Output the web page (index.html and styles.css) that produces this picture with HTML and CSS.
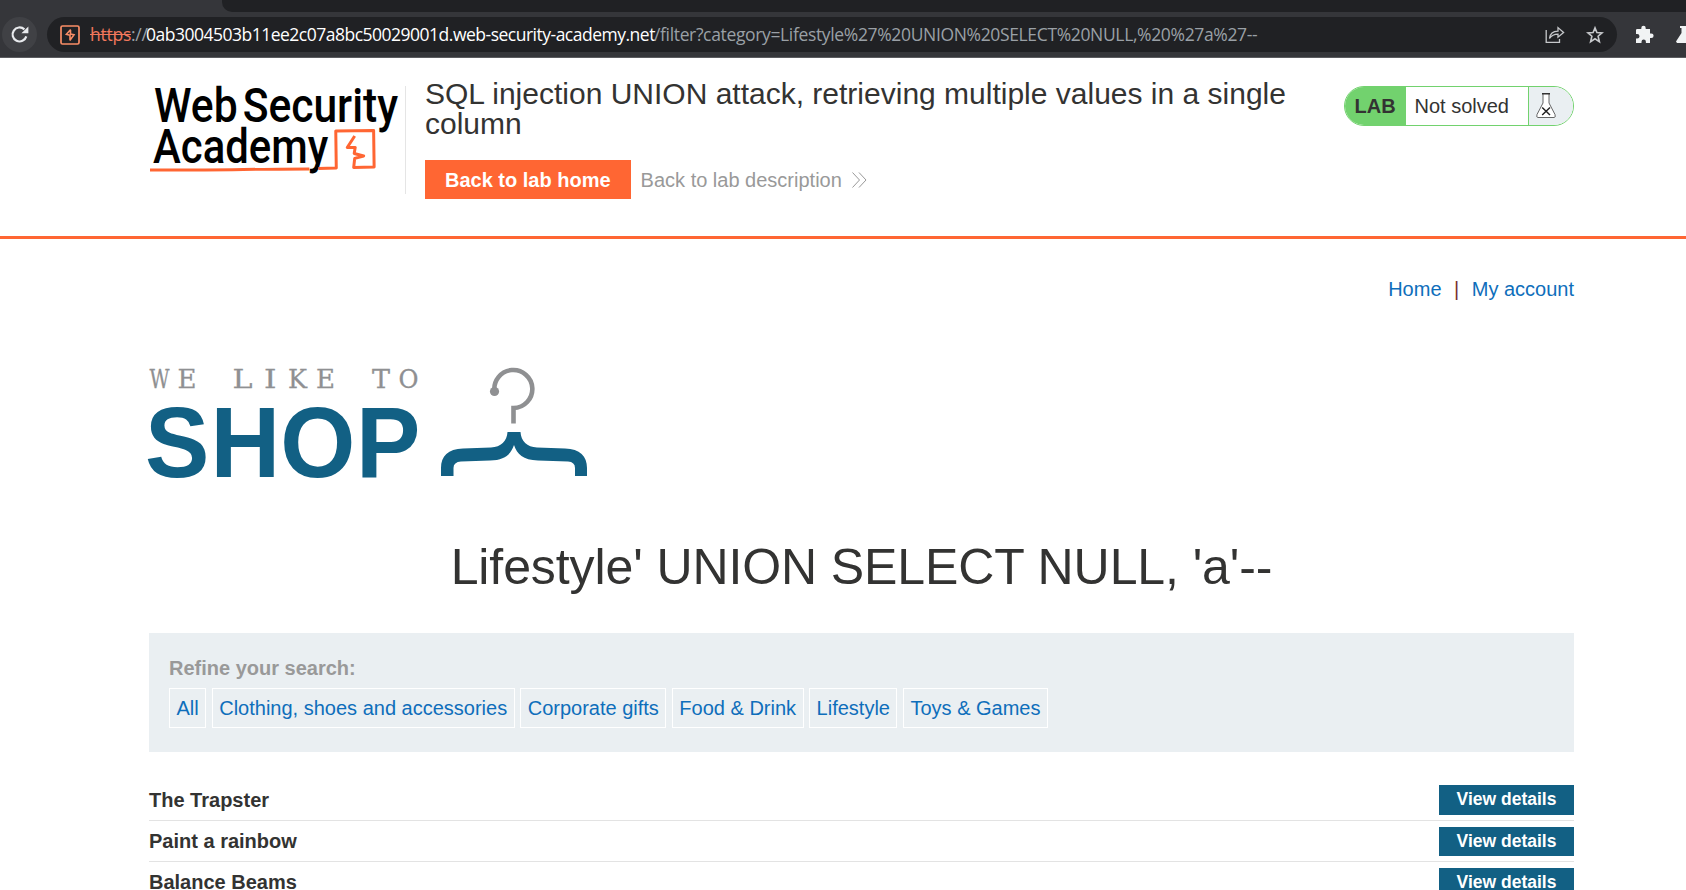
FILE: index.html
```html
<!DOCTYPE html>
<html lang="en">
<head>
<meta charset="utf-8">
<title>SQL injection UNION attack, retrieving multiple values in a single column</title>
<link rel="stylesheet" href="styles.css">
</head>
<body>
<div class="chrome">
  <div class="tabstrip"></div>
  <div class="toolbar">
    <div class="reload">
      <svg width="18" height="17" viewBox="0 0 18 17"><path d="M15.3 10.4A7 7 0 1 1 13.400 3.400" fill="none" stroke="#e8eaed" stroke-width="2.2"/><path d="M17.400 .4V7.200h-7z" fill="#e8eaed"/></svg>
    </div>
    <div class="omnibox">
      <svg class="favicon" width="20" height="20" viewBox="0 0 20 20" fill="none" stroke="#f98d66"><rect x="1" y="1" width="18" height="18" rx="1.5" stroke-width="1.7"/><path d="M10.700 4.500L6.400 9.300 10 10.300V15.500M10.500 5V9L14 9.800 9.800 15.500" stroke-width="1.6"/></svg>
      <div class="url"><span class="scheme"><s>https</s>://</span><span class="host">0ab3004503b11ee2c07a8bc50029001d.web-security-academy.net</span><span class="path">/filter?category=Lifestyle%27%20UNION%20SELECT%20NULL,%20%27a%27--</span></div>
      <svg class="share" width="20" height="18" viewBox="0 0 20 18" fill="none" stroke="#c6c8cb" stroke-width="1.3"><path d="M1.200 4V16.400H14.500V13M4.500 12.500C5 8 8 5.200 13 5.200V1.600L18.600 6.500 13 11.200V8.200C9 8.200 6.500 9.500 4.500 12.500z"/></svg>
      <svg class="star" width="18" height="18" viewBox="0 0 18 18" fill="none" stroke="#c6c8cb" stroke-width="1.6"><path d="M9 1.900L10.900 6.500 16 6.900 12.100 10.200 13.400 15.700 9 12.800 4.600 15.700 5.900 10.200 2 6.900 7.100 6.500z"/></svg>
    </div>
    <svg class="puzzle" width="18" height="19" viewBox="0 0 18 19" fill="#f1f3f4"><path d="M1.500 4H5.300V3a2.200 2.200 0 0 1 4.400 0V4H14v4.500h1.300a2.300 2.300 0 0 1 0 4.600H14V18H9.900v-1.300a2.200 2.200 0 0 0-4.400 0V18H0V13.400H1.300a2.200 2.200 0 0 0 0-4.400H0V5.300A1.300 1.300 0 0 1 1.500 4z"/></svg>
    <svg class="flask" width="18" height="19" viewBox="0 0 18 19" fill="#f1f3f4"><path d="M4 1H14V3H12.500V7L18 16V18H1L0 16.500 5.500 8V3H4z"/></svg>
  </div>
</div>
<header class="lab-header">
  <svg class="academy" width="257" height="108" viewBox="149 86 257 108">
    <g class="academy-text">
      <text x="154" y="122.300" textLength="84" lengthAdjust="spacingAndGlyphs">Web</text>
      <text x="243" y="122.300" textLength="156" lengthAdjust="spacingAndGlyphs">Security</text>
      <text x="153" y="163" textLength="176" lengthAdjust="spacingAndGlyphs">Academy</text>
    </g>
    <g fill="none" stroke="#ff6633" stroke-width="3" stroke-linejoin="round">
      <path d="M150 170C190 171 260 169 310 169M319 168.500L337 168 336.500 131 374.500 130.500 375 167 354.500 167.500 355.500 158.500 364.500 156 355 153.500 356 147.500 348 147.500 355.500 136"/>
    </g>
  </svg>
  <div class="lab-info">
    <h2>SQL injection UNION attack, retrieving multiple values in a single column</h2>
    <div class="lab-links">
      <a class="lab-home">Back to lab home</a>
      <a class="lab-desc">Back to lab description</a>
      <svg width="15" height="16" viewBox="0 0 15 16" fill="none" stroke="#999" stroke-width="1"><path d="M.5.500L7.500 8 .5 15.500M7 .5L14 8 7 15.500"/></svg>
    </div>
  </div>
  <div class="status">
    <b>LAB</b><span class="state">Not solved</span>
    <span class="state-icon"><svg width="20" height="25" viewBox="0 0 20 25" fill="none"><path d="M7 1V10L1 21.500Q0 24.500 2 24.500H18Q20 24.500 19 21.500L13 10V1" fill="#fff" stroke="#555" stroke-width=".9"/><path d="M6 .8H14" stroke="#333" stroke-width="1.500"/><path d="M6.200 14.500L14 22M14 14.500L6.200 22" stroke="#222" stroke-width="1.500"/></svg></span>
  </div>
</header>
<main>
  <nav class="account"><a>Home</a><span>|</span><a>My account</a></nav>
  <svg class="shop" width="440" height="114" viewBox="149 366 440 114">
    <text class="tagline" y="388"><tspan x="149.500" textLength="20" lengthAdjust="spacingAndGlyphs">W</tspan><tspan x="177.500" textLength="19" lengthAdjust="spacingAndGlyphs">E</tspan> <tspan x="232.500" textLength="20" lengthAdjust="spacingAndGlyphs">L</tspan><tspan x="264" textLength="12.500" lengthAdjust="spacingAndGlyphs">I</tspan><tspan x="288" textLength="19" lengthAdjust="spacingAndGlyphs">K</tspan><tspan x="316" textLength="19" lengthAdjust="spacingAndGlyphs">E</tspan> <tspan x="372" textLength="18" lengthAdjust="spacingAndGlyphs">T</tspan><tspan x="398.500" textLength="20" lengthAdjust="spacingAndGlyphs">O</tspan></text>
    <g transform="scale(.965 1)"><text class="shop-word" x="150.300 218.100 290.500 368.900" y="476.700">SHOP</text></g>
    <path d="M494.500 391.500A19 19 0 1 1 513.500 408V423.500" fill="none" stroke="#8f9092" stroke-width="4.600"/>
    <circle cx="494.500" cy="391.500" r="4.600" fill="#8f9092"/>
    <path d="M507.500 432H520.500C521 441 527 447 537 447.500L565 448.500C580 449 587 456 587 468V476H575V468Q575 462 568 461.500L538 460.500C523 460 517 454 514 445C511 454 505 460 490 460.500L461 461.500Q453.500 462 453.500 468V476H441V468C441 456 448 449 463 448.500L491 447.500C501 447 507 441 507.500 432z" fill="#126084"/>
  </svg>
  <h1>Lifestyle' UNION SELECT NULL, 'a'--</h1>
  <section class="filters">
    <label>Refine your search:</label>
    <div class="tags"><a>All</a><a>Clothing, shoes and accessories</a><a>Corporate gifts</a><a>Food &amp; Drink</a><a>Lifestyle</a><a>Toys &amp; Games</a></div>
  </section>
  <div class="products">
    <div class="row"><b>The Trapster</b><a>View details</a></div>
    <div class="row"><b>Paint a rainbow</b><a>View details</a></div>
    <div class="row"><b>Balance Beams</b><a>View details</a></div>
  </div>
</main>
</body>
</html>
```
FILE: styles.css
```css
* { box-sizing: border-box; }
html, body { height: 890px; overflow: hidden; }
body { margin: 0; background: #fff; color: #333332; font: 20px/25px "Liberation Sans", Arial, sans-serif; }
svg { display: block; flex: none; overflow: visible; }
.chrome { height: 58px; background: #35363a; border-bottom: 1px solid #5b5c60; }
.tabstrip { height: 12px; margin-left: 222px; background: #202124; border-bottom-left-radius: 10px; }
.toolbar { display: flex; align-items: center; height: 45px; padding: 5px 0 5px 2px; overflow: hidden; }
.reload { display: flex; flex: none; align-items: center; justify-content: center; width: 35px; height: 35px; border-radius: 50%; background: #404145; }
.omnibox { display: flex; flex: none; align-items: center; width: 1570px; height: 35px; margin-left: 10px; padding-left: 13px; border-radius: 18px; background: #202124; }
.url { flex: none; width: 1455px; margin-left: 10px; padding-bottom: 1px; font: 17.5px/24px "Open Sans", "Noto Sans", sans-serif; color: #9aa0a6; white-space: nowrap; }
.scheme, .host, .path { display: inline-block; }
.scheme { width: 56px; letter-spacing: -.25px; }
.scheme s { color: #f2785c; }
.host { width: 508px; color: #fff; letter-spacing: -.5px; }
.path { letter-spacing: -.35px; }
.star { margin-left: 21px; }
.puzzle { margin-left: 19px; margin-bottom: 1px; }
.flask { margin-left: 22px; margin-bottom: 1px; }
.lab-header { display: flex; align-items: flex-start; height: 181px; padding: 22px 112px 0 149px; border-bottom: 3px solid #ff6633; }
.academy { margin-top: 6px; border-right: 1px solid #e5e5e5; }
.academy-text { font: 500 48.5px Roboto, sans-serif; fill: #000; }
.lab-info { width: 900px; padding-left: 19px; }
.lab-info h2 { margin: -1px 0 21px; font-size: 30px; line-height: 30px; font-weight: 400; }
.lab-links { display: flex; align-items: center; height: 39px; color: #999; }
.lab-home { padding: 8px 20px 6px; background: #ff6633; color: #fff; font-weight: 700; }
.lab-desc { margin: 0 10px 0 10px; padding-top: 1px; }
.status { display: flex; width: 230px; height: 40px; margin: 6px 0 0 auto; overflow: hidden; border: 1px solid #72d26e; border-radius: 20px; line-height: 38px; }
.status b { width: 61px; padding-left: 9.5px; background: #72d26e; }
.state { width: 123px; padding-left: 8.5px; border-right: 1px solid #72d26e; }
.state-icon { flex: 1; padding: 6px 0 0 7px; background: #eaeff2; }
main { padding: 38px 112px 0 149px; }
.account { display: flex; justify-content: flex-end; gap: 12.500px; }
.account a, .tags a { color: #0e6ebb; }
.account span { color: #7a3030; }
.shop { margin-top: 64px; margin-bottom: 57px; }
.tagline { font: 26px "DejaVu Serif", serif; fill: #8f9092; stroke: #8f9092; stroke-width: .3px; }
.shop-word { font: 700 100px "Liberation Sans", Arial, sans-serif; fill: #126084; }
h1 { margin: 57px 0 36px; font-size: 50px; line-height: 60px; font-weight: 400; letter-spacing: -.1px; text-align: center; }
.filters { height: 119px; padding: 23px 20px; background: #eaeff2; }
.filters label { display: block; color: #999; font-weight: 700; }
.tags { display: flex; gap: 5.500px; margin-top: 7px; }
.tags a { height: 40px; padding: 0 6.500px; border: 1px solid #fff; line-height: 38px; }
.products { padding-top: 28px; }
.row { display: flex; align-items: center; justify-content: space-between; height: 41px; border-bottom: 1px solid #e3e3e3; }
.row a { width: 135px; height: 29px; background: #126084; color: #fff; font-size: 17.5px; line-height: 29px; font-weight: 700; text-align: center; }
.row:first-child a { height: 30px; }
```
